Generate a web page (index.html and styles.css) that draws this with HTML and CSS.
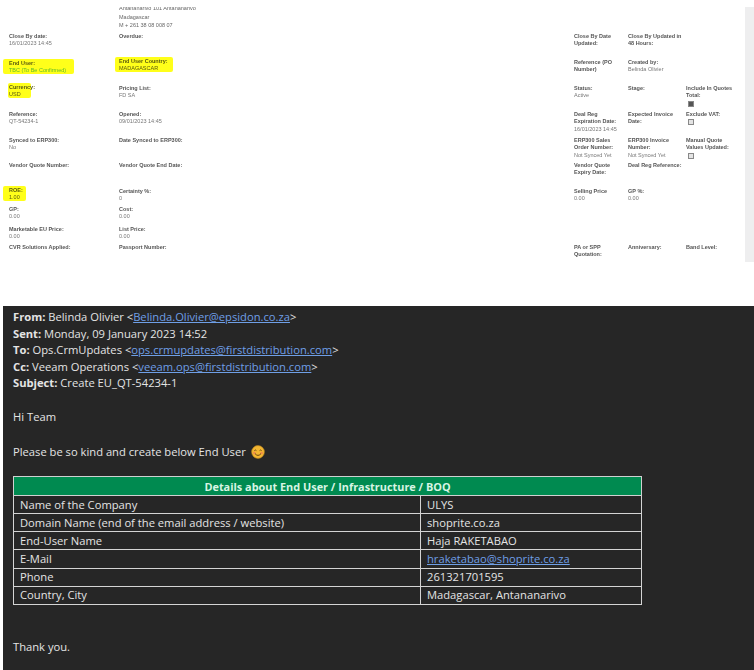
FILE: index.html
```html
<!DOCTYPE html>
<html lang="en">
<head>
<meta charset="utf-8">
<title>Quote details and email</title>
<link rel="stylesheet" href="styles.css">
</head>
<body>
<section class="quote">
  <div class="form">
    <div class="row r0">
      <div class="f"></div>
      <div class="f addr"><span>Antananarivo 101 Antananarivo</span><span>Madagascar</span><span>M + 261 38 08 008 07</span></div>
    </div>
    <div class="row r1">
      <div class="f"><b>Close By date:</b><span>16/01/2023 14:45</span></div>
      <div class="f"><b>Overdue:</b></div>
      <div class="f c3"><b>Close By Date Updated:</b></div>
      <div class="f c4"><b>Close By Updated in 48 Hours:</b></div>
    </div>
    <div class="row r2">
      <div class="f"><div class="hl hl-a"><b>End User:</b><span class="green">TBC (To Be Confirmed)</span></div></div>
      <div class="f"><div class="hl hl-b"><b>End User Country:</b><span>MADAGASCAR</span></div></div>
      <div class="f c3"><b>Reference (PO Number)</b></div>
      <div class="f c4"><b>Created by:</b><span>Belinda Olivier</span></div>
    </div>
    <div class="row r3">
      <div class="f"><div class="hl hl-c"><b>Currency:</b><span>USD</span></div></div>
      <div class="f"><b>Pricing List:</b><span>FD SA</span></div>
      <div class="f c3"><b>Status:</b><span>Active</span></div>
      <div class="f c4"><b>Stage:</b></div>
      <div class="f"><b>Include In Quotes Total:</b><i class="check on"></i></div>
    </div>
    <div class="row r4">
      <div class="f"><b>Reference:</b><span>QT-54234-1</span></div>
      <div class="f"><b>Opened:</b><span>09/01/2023 14:45</span></div>
      <div class="f c3"><b>Deal Reg Expiration Date:</b><span>16/01/2023 14:45</span></div>
      <div class="f c4"><b>Expected Invoice Date:</b></div>
      <div class="f"><b>Exclude VAT:</b><i class="check"></i></div>
    </div>
    <div class="row r5">
      <div class="f"><b>Synced to ERP300:</b><span>No</span></div>
      <div class="f"><b>Date Synced to ERP300:</b></div>
      <div class="f c3"><b>ERP300 Sales Order Number:</b><span>Not Synced Yet</span></div>
      <div class="f c4"><b>ERP300 Invoice Number:</b><span>Not Synced Yet</span></div>
      <div class="f"><b>Manual Quote Values Updated:</b><i class="check"></i></div>
    </div>
    <div class="row r6">
      <div class="f"><b>Vendor Quote Number:</b></div>
      <div class="f"><b>Vendor Quote End Date:</b></div>
      <div class="f c3"><b>Vendor Quote Expiry Date:</b></div>
      <div class="f wide"><b>Deal Reg Reference:</b></div>
    </div>
    <div class="row r7">
      <div class="f"><div class="hl hl-d"><b>ROE:</b><span>1.00</span></div></div>
      <div class="f"><b>Certainty %:</b><span>0</span></div>
      <div class="f c3"><b>Selling Price</b><span>0.00</span></div>
      <div class="f c4"><b>GP %:</b><span>0.00</span></div>
    </div>
    <div class="row r8">
      <div class="f"><b>GP:</b><span>0.00</span></div>
      <div class="f"><b>Cost:</b><span>0.00</span></div>
    </div>
    <div class="row r9">
      <div class="f"><b>Marketable EU Price:</b><span>0.00</span></div>
      <div class="f"><b>List Price:</b><span>0.00</span></div>
    </div>
    <div class="row r10">
      <div class="f"><b>CVR Solutions Applied:</b></div>
      <div class="f"><b>Passport Number:</b></div>
      <div class="f c3"><b>PA or SPP Quotation:</b></div>
      <div class="f c4"><b>Anniversary:</b></div>
      <div class="f"><b>Band Level:</b></div>
    </div>
  </div>
  <div class="strip"></div>
</section>
<section class="mail">
  <p class="head"><strong>From:</strong> Belinda Olivier &lt;<a>Belinda.Olivier@epsidon.co.za</a>&gt;</p>
  <p class="head"><strong>Sent:</strong> Monday, 09 January 2023 14:52</p>
  <p class="head"><strong>To:</strong> Ops.CrmUpdates &lt;<a>ops.crmupdates@firstdistribution.com</a>&gt;</p>
  <p class="head"><strong>Cc:</strong> Veeam Operations &lt;<a>veeam.ops@firstdistribution.com</a>&gt;</p>
  <p class="head"><strong>Subject:</strong> Create EU_QT-54234-1</p>
  <p class="hi">Hi Team</p>
  <p class="please">Please be so kind and create below End User
    <svg class="emoji" viewBox="0 0 14 14" aria-hidden="true">
      <circle cx="7" cy="7" r="6.4" fill="#f2b632" stroke="#b9821c" stroke-width=".6"/>
      <circle cx="3.4" cy="8" r="1.3" fill="#ee8a4a"/>
      <circle cx="10.6" cy="8" r="1.3" fill="#ee8a4a"/>
      <path d="M3.4 5.6q1-1.2 2 0M8.6 5.6q1-1.2 2 0" fill="none" stroke="#5a3a10" stroke-width=".9"/>
      <path d="M4 8.6q3 3.6 6 0" fill="none" stroke="#5a3a10" stroke-width=".9"/>
    </svg>
  </p>
  <table class="details">
    <colgroup><col class="col-a"><col></colgroup>
    <thead><tr><th colspan="2"><span class="th-text">Details about End User / Infrastructure / BOQ</span></th></tr></thead>
    <tbody>
      <tr><td>Name of the Company</td><td>ULYS</td></tr>
      <tr><td>Domain Name (end of the email address / website)</td><td>shoprite.co.za</td></tr>
      <tr><td>End-User Name</td><td>Haja RAKETABAO</td></tr>
      <tr><td>E-Mail</td><td><a>hraketabao@shoprite.co.za</a></td></tr>
      <tr><td>Phone</td><td>261321701595</td></tr>
      <tr><td>Country, City</td><td>Madagascar, Antananarivo</td></tr>
    </tbody>
  </table>
  <p class="thanks">Thank you.</p>
</section>
</body>
</html>
```
FILE: styles.css
```css
* { box-sizing: border-box; }
html, body { margin: 0; padding: 0; }
body { width: 754px; height: 670px; overflow: hidden; background: #fff; }

.quote { height: 306px; display: flex; align-items: flex-start; }
.form { width: 745px; height: 262px; padding: 0 0 0 9px; overflow: hidden; font: 5.5px/7.3px "Liberation Sans", Arial, sans-serif; color: #666; filter: blur(.4px); }
.strip { width: 9px; height: 255px; margin-top: 7px; background: #eeeeef; }

.row { display: grid; grid-template-columns: 110px 455px 54px 58px 50px; }
.r0 { height: 33px; padding-top: 7px; }
.r1 { height: 26px; }
.r2 { height: 26px; }
.r3 { height: 26px; }
.r4 { height: 26px; }
.r5 { height: 25px; }
.r6 { height: 26px; }
.r7 { height: 18px; }
.r8 { height: 20px; }
.r9 { height: 18px; }
.r10 { height: 20px; }

.f { min-width: 0; }
.f b { display: block; color: #555; font-weight: 700; max-width: 50px; }
.f:nth-child(-n+2) b { max-width: none; }
.f span { display: block; color: #777; }
.c3 b { max-width: 46px; }
.c4 b { max-width: 56px; }
.wide b { max-width: none !important; white-space: nowrap; }
.addr { grid-column: 2; height: 24px; overflow: hidden; line-height: 8.5px; }
.addr span { color: #666; position: relative; top: -3px; }
.green { color: #5dbb2a !important; }

.hl { background: #ffff1a; border-radius: 2px; padding-top: 1px; height: 15px; }
.hl b, .hl span { color: #5a5a10; }
.hl-a { width: 71px; margin: 0 0 0 -6px; padding-left: 6px; }
.hl-b { width: 58px; margin: -2px 0 0 -4px; padding-left: 4px; }
.hl-c { width: 23px; margin: -2px 0 0 -1px; padding-left: 1px; }
.hl-d { width: 23px; margin: -2px 0 0 -6px; padding-left: 6px; }

.check { display: block; width: 6px; height: 6px; margin: 1px 0 0 2px; background: #e4e4e4; border: 1px solid #888; }
.check.on { background: #555; }

.mail { height: 364px; margin-left: 3px; padding: 3px 0 0 10px; background: #262626; color: #e4e4e4; font: 11.2px/16.6px "Open Sans", "Noto Sans", sans-serif; }
.mail p { margin: 0; }
.mail a { color: #6f9fe6; text-decoration: underline; }
.head strong { font-weight: 700; }
.hi { margin-top: 17px !important; }
.please { margin-top: 18px !important; display: flex; align-items: center; gap: 5px; }
.emoji { width: 14px; height: 14px; display: block; }

.details { margin-top: 16px; width: 629px; border-collapse: collapse; table-layout: fixed; font-size: 11.2px; }
.col-a { width: 407px; }
.details th { height: 19px; padding: 1px 0 0; background: #008a50; color: #d8f5e4; font-weight: 700; text-align: center; border: 1px solid #d0d0d0; line-height: 17px; }
.th-text { font-size: 10.9px; }
.details td { height: 18.1px; padding: 0 0 0 6px; border: 1px solid #d4d4d4; line-height: 16px; overflow: hidden; white-space: nowrap; }

.thanks { margin-top: 34px !important; }
```
